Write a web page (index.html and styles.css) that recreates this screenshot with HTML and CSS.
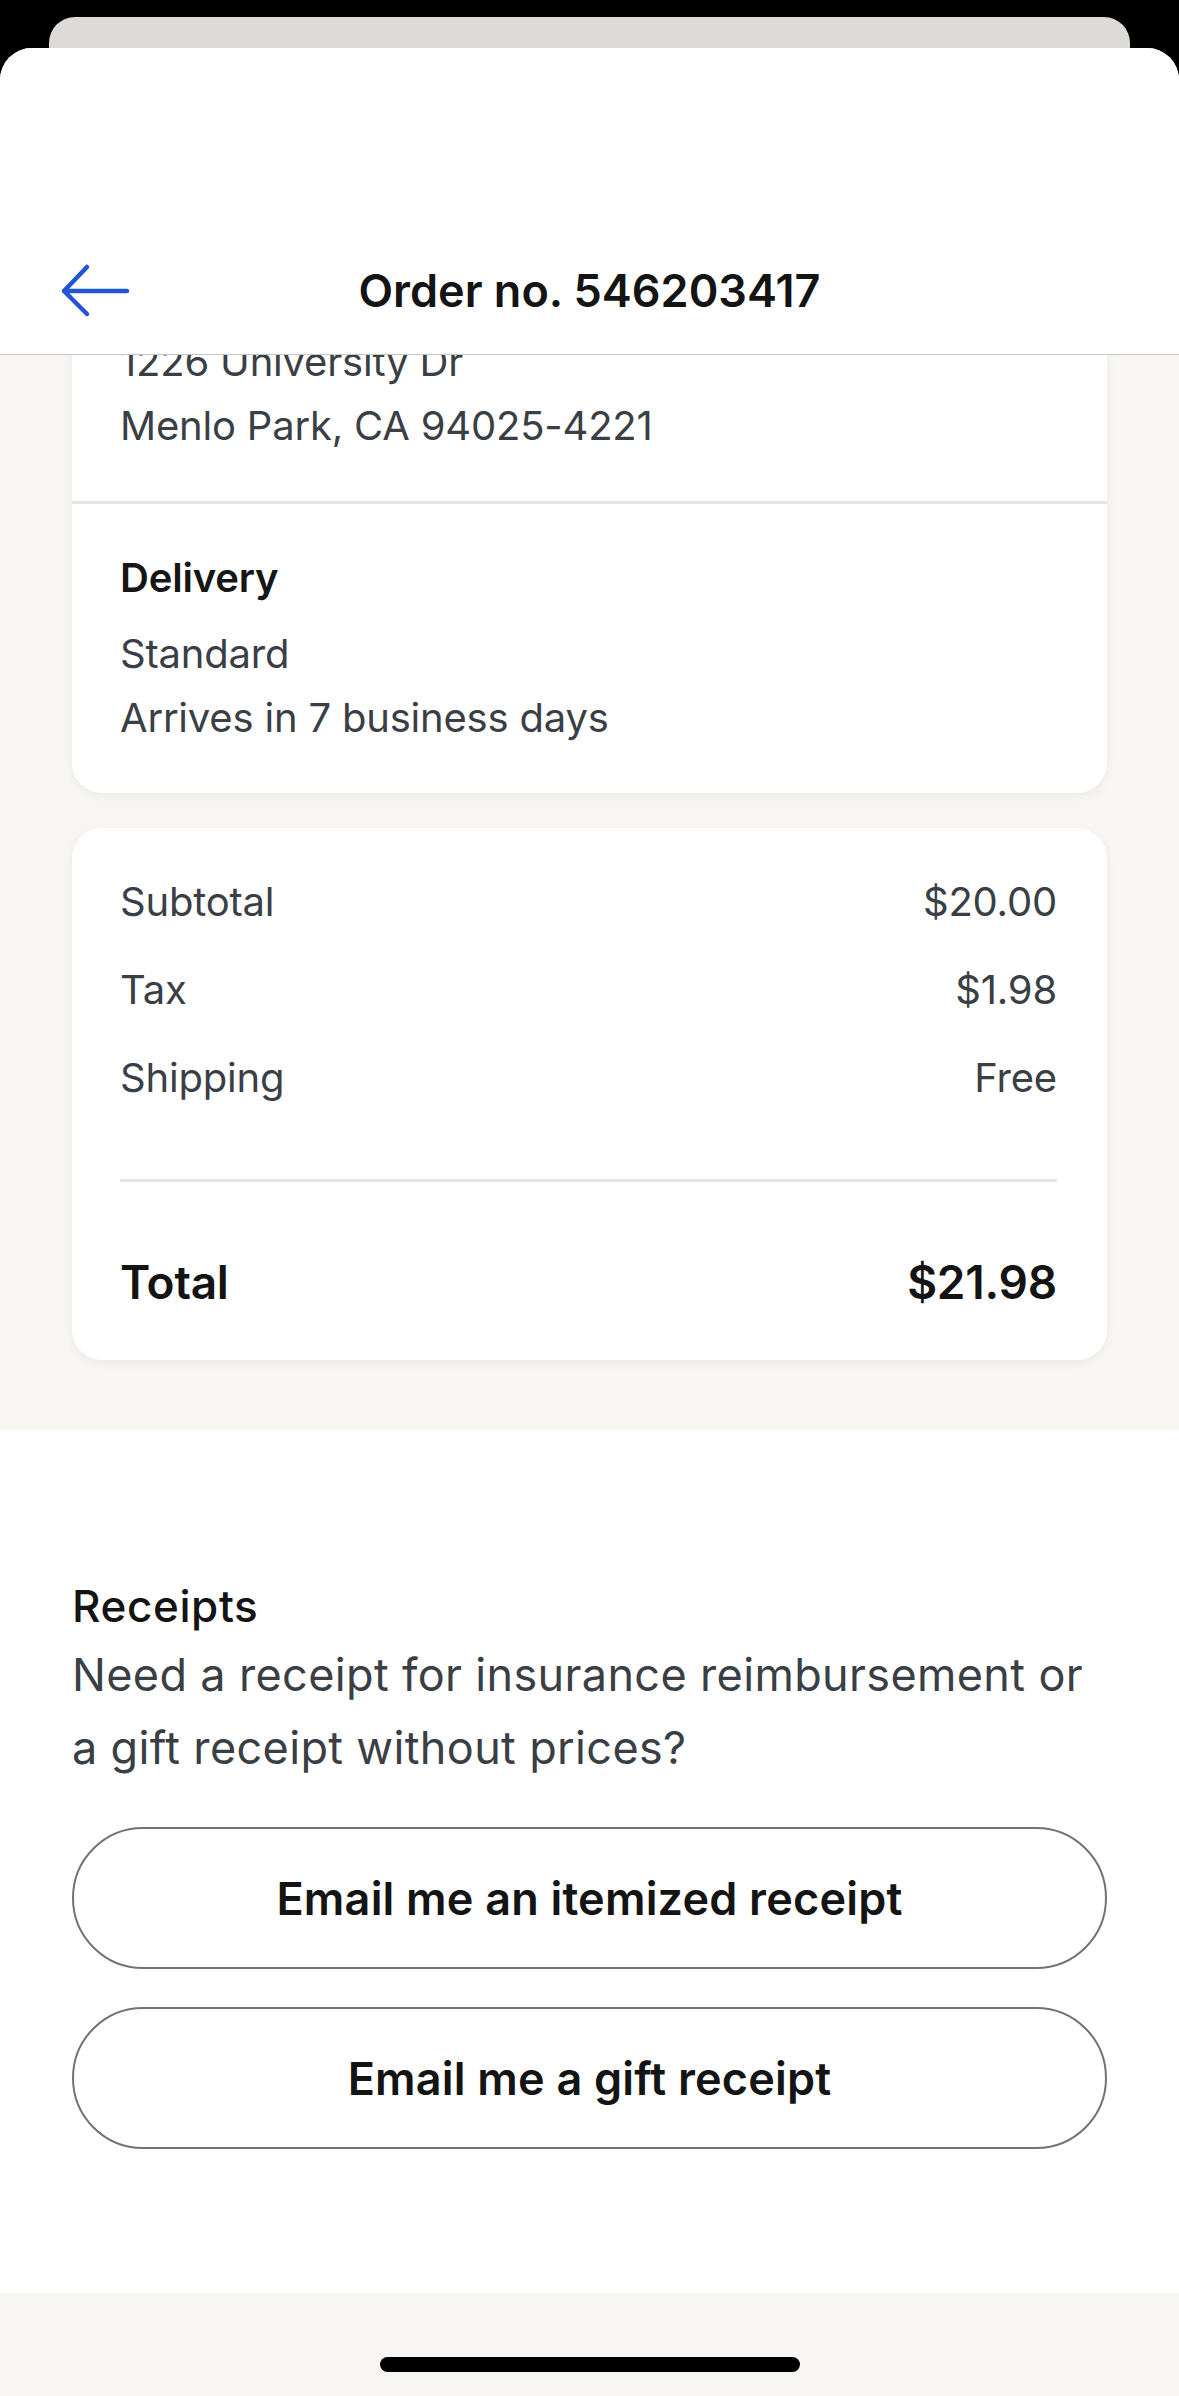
FILE: index.html
```html
<!DOCTYPE html>
<html lang="en">
<head>
<meta charset="utf-8">
<title>Order no. 546203417</title>
<link rel="stylesheet" href="styles.css">
</head>
<body>
<div class="screen">
  <div class="back-card"></div>
  <div class="sheet">
    <header class="header">
      <div class="header-row">
        <div class="back">
          <svg class="back-icon" width="72" height="58" viewBox="0 0 72 58" aria-hidden="true">
            <path d="M4 30 H67 M27 6 L4 30 L27 53" fill="none" stroke="#2155d3" stroke-width="4.5" stroke-linecap="round" stroke-linejoin="round"/>
          </svg>
        </div>
        <h1 class="title">Order no. 546203417</h1>
        <div></div>
      </div>
    </header>

    <section class="scroll">
      <div class="card card-address">
        <div class="addr">
          <p class="line">1226 University Dr</p>
          <p class="line">Menlo Park, CA 94025-4221</p>
        </div>
        <div class="delivery">
          <p class="line strong">Delivery</p>
          <p class="line">Standard</p>
          <p class="line">Arrives in 7 business days</p>
        </div>
      </div>

      <div class="card card-totals">
        <div class="rows">
          <div class="row"><span>Subtotal</span><span>$20.00</span></div>
          <div class="row"><span>Tax</span><span>$1.98</span></div>
          <div class="row"><span>Shipping</span><span>Free</span></div>
        </div>
        <div class="divider"></div>
        <div class="row total"><span>Total</span><span>$21.98</span></div>
      </div>
    </section>

    <section class="receipts">
      <h2 class="receipts-title">Receipts</h2>
      <p class="receipts-text">Need a receipt for insurance reimbursement or a gift receipt without prices?</p>
      <div class="buttons">
        <button class="pill">Email me an itemized receipt</button>
        <button class="pill">Email me a gift receipt</button>
      </div>
    </section>

    <footer class="home">
      <div class="home-bar"></div>
    </footer>
  </div>
</div>
</body>
</html>
```

FILE: styles.css
```css
* { box-sizing: border-box; }

html, body {
  margin: 0;
  padding: 0;
  background: #000;
}

body {
  font-family: Inter, "Noto Sans", "Liberation Sans", sans-serif;
  color: #3a3f45;
}

.screen {
  width: 1179px;
  height: 2396px;
  overflow: hidden;
  background: #000;
  padding-top: 17px;
  display: flex;
  flex-direction: column;
}

.back-card {
  margin: 0 49px;
  height: 31px;
  background: #dcdbd8;
  border-radius: 26px 26px 0 0;
  flex: none;
}

.sheet {
  flex: 1;
  background: #fff;
  border-radius: 32px 32px 0 0;
  display: flex;
  flex-direction: column;
  overflow: hidden;
}

/* Header */
.header {
  height: 307px;
  flex: none;
  display: flex;
  align-items: flex-end;
  padding-bottom: 19px;
  border-bottom: 1px solid #c6c6c6;
  background: #fff;
  position: relative;
  z-index: 2;
}

.header-row {
  width: 100%;
  height: 90px;
  display: grid;
  grid-template-columns: 1fr auto 1fr;
  align-items: center;
}

.back {
  padding-left: 60px;
  display: flex;
  align-items: center;
}

.back-icon { display: block; }

.title {
  margin: 0;
  font-size: 45px;
  font-weight: 600;
  color: #141414;
  letter-spacing: 0;
}

/* Scroll area */
.scroll {
  height: 1075px;
  flex: none;
  overflow: hidden;
  background: #f7f6f3;
  padding: 0 72px;
}

.card {
  background: #fff;
  border-radius: 30px;
  box-shadow: 0 3px 10px rgba(0, 0, 0, 0.05);
}

.line {
  margin: 0;
  font-size: 40px;
  line-height: 64px;
  color: #3a3f45;
  letter-spacing: -0.2px;
}

.line.strong {
  font-weight: 600;
  color: #161616;
  margin-bottom: 12px;
}

.card-address {
  margin-top: -67px;
}

.addr {
  padding: 42px 48px 43px;
  border-bottom: 3px solid #e4e6e8;
}

.delivery {
  padding: 42px 48px 43px;
  display: flex;
  flex-direction: column;
}

.card-totals {
  margin-top: 35px;
  padding: 42px 50px 46px 48px;
}

.rows {
  display: flex;
  flex-direction: column;
  gap: 24px;
}

.row {
  display: flex;
  justify-content: space-between;
  align-items: baseline;
  font-size: 40px;
  line-height: 64px;
  color: #3a3f45;
  letter-spacing: -0.2px;
}

.divider {
  height: 3px;
  background: #e4e6e8;
  margin: 69px 0 68px;
}

.row.total {
  font-size: 46px;
  font-weight: 600;
  color: #141414;
}

/* Receipts */
.receipts {
  height: 863px;
  flex: none;
  background: #fff;
  padding: 148px 72px 0;
}

.receipts-title {
  margin: 0;
  font-size: 44px;
  line-height: 56px;
  font-weight: 500;
  color: #141414;
  letter-spacing: 0.6px;
}

.receipts-text {
  margin: 4px 0 0;
  font-size: 45px;
  line-height: 73px;
  color: #3a3f45;
  letter-spacing: 0.35px;
  max-width: 1030px;
}

.buttons {
  margin-top: 43px;
  display: flex;
  flex-direction: column;
  gap: 38px;
}

.pill {
  height: 142px;
  width: 100%;
  border: 2.5px solid #707377;
  border-radius: 71px;
  background: #fff;
  font-family: inherit;
  font-size: 45px;
  font-weight: 600;
  color: #141414;
  letter-spacing: 0.2px;
}

/* Home indicator */
.home {
  flex: 1;
  background: #f7f6f3;
  display: flex;
  justify-content: center;
  padding-top: 64px;
}

.home-bar {
  width: 420px;
  height: 15px;
  border-radius: 8px;
  background: #000;
}
```
